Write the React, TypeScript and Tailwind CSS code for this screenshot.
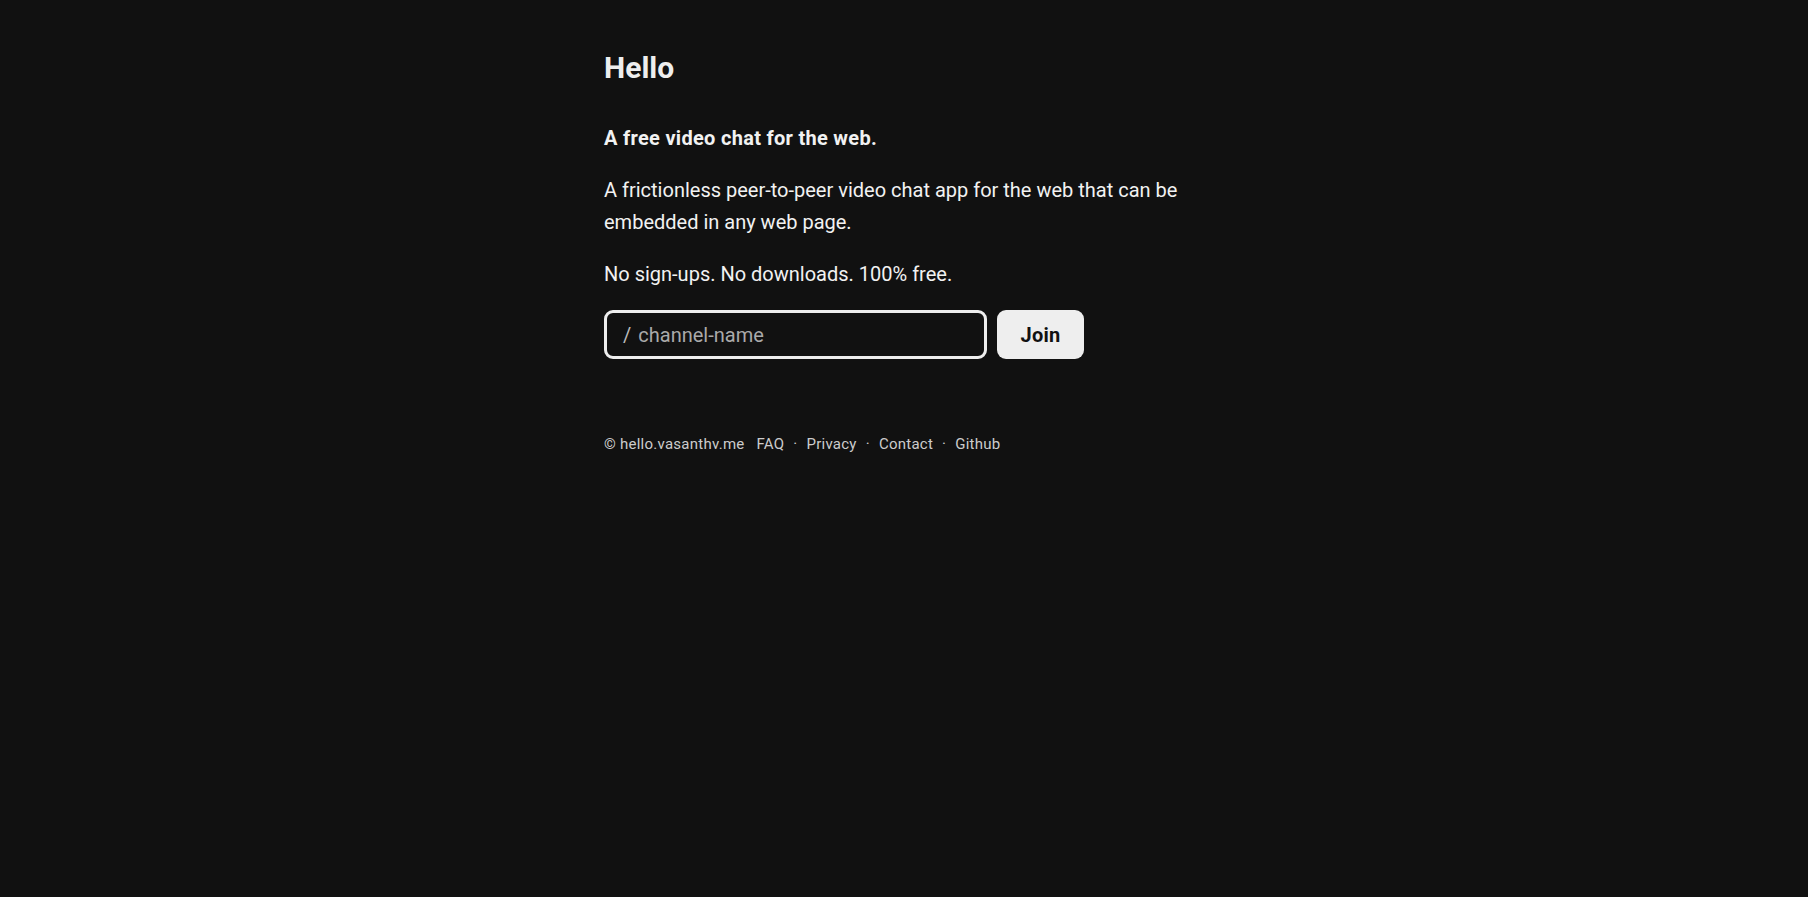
import React, { useState } from 'react';

export default function App() {
  const [channel, setChannel] = useState('');

  return (
    <div className="min-h-screen bg-[#111111] text-[#f2f2f2] font-['Roboto','Inter',sans-serif]">
      <main className="mx-auto w-[600px] pt-[44px] text-[20px] leading-[32px]">
        {/* Heading */}
        <h1 className="text-[30px] leading-[48px] font-bold text-[#eeeeee]">Hello</h1>

        <p className="mt-[30px] font-bold tracking-[0.3px]">A free video chat for the web.</p>
        <p className="mt-[20px]">
          A frictionless peer-to-peer video chat app for the web that can be embedded in any web page.
        </p>
        <p className="mt-[20px]">No sign-ups. No downloads. 100% free.</p>

        {/* Join form */}
        <form className="mt-[20px] flex gap-[10px]" onSubmit={e => e.preventDefault()}>
          <label className="flex h-[49px] w-[383px] items-center rounded-[9px] border-[3px] border-[#eeeeee] bg-[#111111] pl-[16px] pr-3">
            <span className="text-[#bbbbbb] mr-[7px]">/</span>
            <input
              value={channel}
              onChange={e => setChannel(e.target.value)}
              placeholder="channel-name"
              className="w-full bg-transparent text-[20px] text-[#eeeeee] placeholder-[#aaaaaa] outline-none"
            />
          </label>
          <button className="h-[49px] w-[87px] rounded-[9px] bg-[#eeeeee] text-[20px] font-bold tracking-[0.3px] text-[#111111]">
            Join
          </button>
        </form>

        {/* Footer */}
        <footer className="mt-[73px] text-[15px] leading-[24px] tracking-[0.25px] text-[#cccccc]">
          <span>© hello.vasanthv.me</span>
          <span className="ml-[12px]">FAQ</span>
          <span className="mx-[9px]">·</span>
          <span>Privacy</span>
          <span className="mx-[9px]">·</span>
          <span>Contact</span>
          <span className="mx-[9px]">·</span>
          <span>Github</span>
        </footer>
      </main>
    </div>
  );
}
